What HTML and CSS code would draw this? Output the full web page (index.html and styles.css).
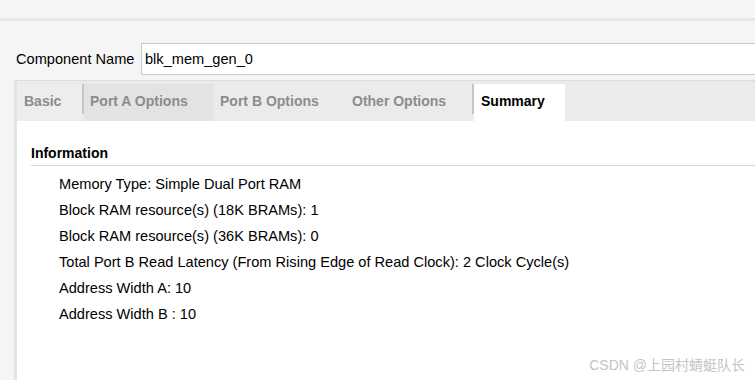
FILE: index.html
```html
<!DOCTYPE html>
<html>
<head>
<meta charset="utf-8">
<link rel="stylesheet" href="styles.css">
</head>
<body>
<div class="top"></div>
<div class="rule"></div>
<div class="name-row">
  <label class="name-label">Component Name</label>
  <div class="name-input">blk_mem_gen_0</div>
</div>
<div class="panel">
  <div class="tabs-strip">
    <div class="tab tab-basic">Basic</div>
    <div class="sep"></div>
    <div class="tab tab-a">Port A Options</div>
    <div class="tab tab-b">Port B Options</div>
    <div class="tab tab-other">Other Options</div>
    <div class="sep"></div>
    <div class="tab tab-summary">Summary</div>
  </div>
  <div class="content">
    <div class="info-title">Information</div>
    <ul class="info-list">
      <li>Memory Type: Simple Dual Port RAM</li>
      <li>Block RAM resource(s) (18K BRAMs): 1</li>
      <li>Block RAM resource(s) (36K BRAMs): 0</li>
      <li>Total Port B Read Latency (From Rising Edge of Read Clock): 2 Clock Cycle(s)</li>
      <li>Address Width A: 10</li>
      <li>Address Width B : 10</li>
    </ul>
  </div>
</div>
<div class="watermark">CSDN @上园村蜻蜓队长</div>
</body>
</html>
```

FILE: styles.css
```css
html, body {
  margin: 0;
  padding: 0;
  background: #f5f5f5;
  font-family: "Liberation Sans", Arial, "Noto Sans CJK SC", sans-serif;
  font-size: 14.6px;
  color: #000;
  overflow: hidden;
  width: 755px;
  height: 380px;
}
.top {
  height: 18px;
}
.rule {
  height: 3px;
  background: #e6e6e6;
}
.name-row {
  display: flex;
  align-items: center;
  margin-top: 22px;
  height: 32px;
}
.name-label {
  flex: none;
  white-space: nowrap;
  padding-left: 16px;
  width: 141px;
  box-sizing: border-box;
}
.name-input {
  flex: 1;
  margin-right: -20px;
  height: 32px;
  box-sizing: border-box;
  border: 1px solid #c9c9c9;
  border-right: none;
  background: #fff;
  padding-left: 3px;
  line-height: 30px;
}
.panel {
  margin-top: 5px;
  margin-left: 14px;
  height: 300px;
  border-top: 1px solid #dcdcdc;
  border-left: 3px solid #e4e4e4;
  background: #fff;
}
.tabs-strip {
  display: flex;
  background: #ebebeb;
  padding-top: 3px;
  height: 37px;
}
.tab {
  flex: none;
  height: 37px;
  box-sizing: border-box;
  line-height: 34px;
  font-size: 14px;
  font-weight: bold;
  color: #8c8c8c;
  padding-left: 7px;
  white-space: nowrap;
}
.tab-basic {
  width: 65px;
  background: #ededed;
}
.tab-a {
  width: 130px;
  background: #e3e3e3;
  padding-left: 6px;
}
.tab-b {
  width: 132px;
  background: #ebebeb;
  padding-left: 6px;
}
.tab-other {
  width: 126px;
  background: #ebebeb;
  padding-left: 6px;
}
.tab-summary {
  width: 91px;
  background: #fff;
  color: #000;
}
.sep {
  flex: none;
  width: 2px;
  height: 30px;
  background: #c6c6c6;
}
.content {
  padding: 22px 0 0 14px;
}
.info-title {
  font-size: 14px;
  font-weight: bold;
  height: 22px;
  line-height: 20px;
  border-bottom: 1px solid #d4d4d4;
}
.info-list {
  list-style: none;
  margin: 6px 0 0 0;
  padding: 0 0 0 28px;
}
.info-list li {
  height: 26px;
  line-height: 24px;
  white-space: nowrap;
}
.watermark {
  position: absolute;
  right: 10px;
  top: 356px;
  font-size: 14px;
  color: #c4c4c4;
  line-height: 18px;
}
```
